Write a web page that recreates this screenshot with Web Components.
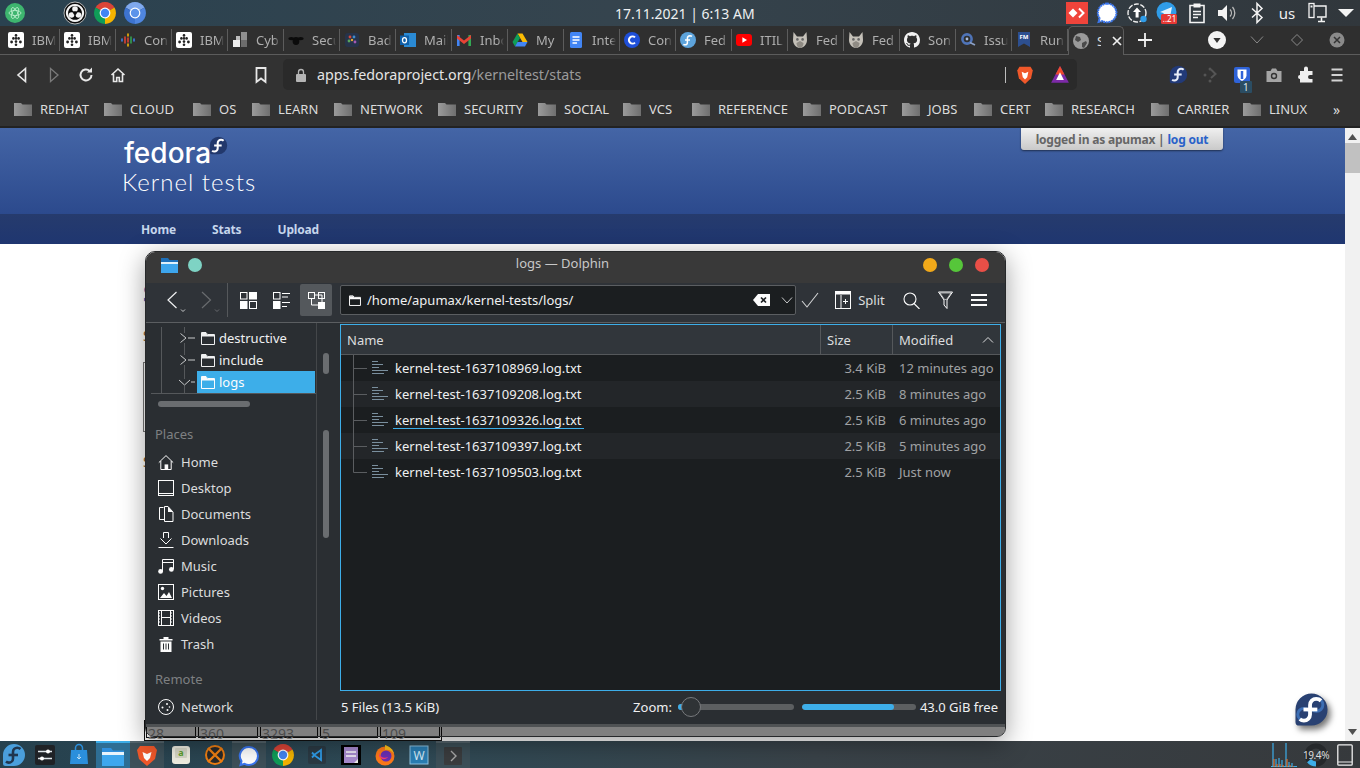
<!DOCTYPE html>
<html lang="en">
<head>
<meta charset="utf-8">
<title>Kernel tests</title>
<style>
  html, body { margin: 0; height: 100%; overflow: hidden; }
  body {
    position: relative;
    width: 1360px;
    height: 768px;
    display: flex;
    flex-direction: column;
    font-family: "Noto Sans", sans-serif;
  }
</style>
</head>
<body>
<top-panel></top-panel>
<browser-tabs></browser-tabs>
<browser-toolbar></browser-toolbar>
<bookmark-bar></bookmark-bar>
<kernel-page></kernel-page>
<task-bar></task-bar>
<dolphin-window></dolphin-window>

<script>
// shared svg helper, viewBox defaults to the 16px breeze grid
const svg = (w, h, body, vb = '0 0 16 16') =>
  `<svg width="${w}" height="${h}" viewBox="${vb}" fill="none" stroke="currentColor" stroke-width="1">${body}</svg>`;

const fedoraBody = (bubble, ink, ring) => `
  <path d="M12 1a11 11 0 0 1 0 22H3.5A2.5 2.5 0 0 1 1 20.5V12A11 11 0 0 1 12 1z" fill="${bubble}" stroke="none"/>
  ${ring ? `<circle cx="15.4" cy="8.8" r="4.4" stroke="${ring}" stroke-width="2"/><circle cx="6.8" cy="15.4" r="4.2" stroke="${ring}" stroke-width="2"/>` : ''}
  <path d="M18.5 6c-1-.9-2.2-1.3-3.3-1.3A4.2 4.2 0 0 0 11 9v6.4a4.2 4.2 0 0 1-4.2 4.2c-1.1 0-2-.3-2.8-1" stroke="${ink}" stroke-width="2.6" fill="none"/>
  <path d="M6.5 12h9.5" stroke="${ink}" stroke-width="2.6"/>`;

const chromeBody = (a, b, c, eye) => `
  <g stroke="none">
    <path d="M12 12 2.5 6.5A11 11 0 0 1 21.5 6.5z" fill="${a}"/>
    <path d="M12 12 21.5 6.5A11 11 0 0 1 12 23z" fill="${b}"/>
    <path d="M12 12 12 23A11 11 0 0 1 2.5 6.5z" fill="${c}"/>
    <circle cx="12" cy="12" r="5.4" fill="#fff"/>
    <circle cx="12" cy="12" r="4.2" fill="${eye}"/>
  </g>`;

const githubPath = 'M8 0C3.58 0 0 3.58 0 8c0 3.54 2.29 6.53 5.47 7.59.4.07.55-.17.55-.38 0-.19-.01-.82-.01-1.49-2.01.37-2.53-.49-2.69-.94-.09-.23-.48-.94-.82-1.13-.28-.15-.68-.52-.01-.53.63-.01 1.08.58 1.23.82.72 1.21 1.87.87 2.33.66.07-.52.28-.87.51-1.07-1.78-.2-3.64-.89-3.64-3.95 0-.87.31-1.59.82-2.15-.08-.2-.36-1.02.08-2.12 0 0 .67-.21 2.2.82.64-.18 1.32-.27 2-.27s1.36.09 2 .27c1.53-1.04 2.2-.82 2.2-.82.44 1.1.16 1.92.08 2.12.51.56.82 1.27.82 2.15 0 3.07-1.87 3.75-3.65 3.95.29.25.54.73.54 1.48 0 1.07-.01 1.93-.01 2.2 0 .21.15.46.55.38A8.01 8.01 0 0 0 16 8c0-4.42-3.58-8-8-8z';

const favicons = {
  ibm: `<rect width="16" height="16" rx="2" fill="#fff" stroke="none"/><g fill="#222" stroke="none"><circle cx="8" cy="3.4" r="1.3"/><circle cx="5.4" cy="6.4" r="1.3"/><circle cx="8" cy="6.4" r="1.3"/><circle cx="10.6" cy="6.4" r="1.3"/><circle cx="3.6" cy="10" r="1.4"/><circle cx="8" cy="9.6" r="1.3"/><circle cx="12.4" cy="10" r="1.4"/><circle cx="8" cy="12.8" r="1.3"/></g>`,
  podcast: `<g stroke-width="1.5" stroke-linecap="round"><path d="M8 2v2M8 12v2" stroke="#fbbc04"/><path d="M8 6v4" stroke="#ea4335"/><path d="M5 5v6" stroke="#ea4335"/><path d="M11 5v6" stroke="#34a853"/><path d="M2 7v2" stroke="#4285f4"/><path d="M14 7v2" stroke="#4285f4"/></g>`,
  cyb: `<g stroke="none"><rect x="9" y="0" width="6" height="8" fill="#8f8f8f"/><rect x="1" y="8" width="7" height="7" fill="#eee"/><rect x="9" y="8" width="6" height="7" fill="#6c6c6c"/><rect x="4" y="4" width="4" height="4" fill="#bbb"/></g>`,
  bee: `<g stroke="none" fill="#0b0b0b"><ellipse cx="8" cy="9" rx="3.4" ry="4"/><ellipse cx="3.4" cy="6.6" rx="3" ry="1.6"/><ellipse cx="12.6" cy="6.6" rx="3" ry="1.6"/></g>`,
  bad: `<rect x="1" y="1" width="14" height="14" rx="3" fill="#26334a" stroke="none"/><g stroke="none"><circle cx="6" cy="5" r="1.4" fill="#d2483b"/><circle cx="10" cy="5" r="1.4" fill="#3f8ccf"/><circle cx="5" cy="9" r="1.4" fill="#58a55c"/><circle cx="8" cy="8" r="1.2" fill="#e1a73a"/><circle cx="11" cy="10" r="1.4" fill="#a559b5"/></g>`,
  outlook: `<rect x="4" y="1" width="12" height="14" fill="#2a8ad4" stroke="none"/><rect x="0" y="3.5" width="9" height="9.5" fill="#0f5fa8" stroke="none"/><ellipse cx="4.5" cy="8.2" rx="2" ry="2.6" stroke="#fff" stroke-width="1.3"/>`,
  gmail: `<g stroke="none"><path d="M1 3h2.6v11H1z" fill="#4285f4"/><path d="M12.4 3H15v11h-2.6z" fill="#34a853"/><path d="M1 3 8 8.6 15 3v3.4L8 12 1 6.4z" fill="#ea4335"/></g>`,
  drive: `<g stroke="none"><path d="M5.5 1.5h5L15.5 10h-5z" fill="#fbbc04"/><path d="M5.5 1.5 .5 10 3 14.5 8 6z" fill="#0f9d58"/><path d="M3 14.5h10l2.5-4.5h-10z" fill="#4285f4"/></g>`,
  docs: `<rect x="2" y="0" width="12" height="16" rx="1.5" fill="#4285f4" stroke="none"/><path d="M4.5 5h7M4.5 8h7M4.5 11h4.5" stroke="#fff" stroke-width="1.4"/>`,
  c: `<circle cx="8" cy="8" r="8" fill="#1f4fd8" stroke="none"/><path d="M11 5.4a3.6 3.6 0 1 0 0 5.2" stroke="#fff" stroke-width="2"/>`,
  fedora: `<circle cx="8" cy="8" r="8" fill="#5da3db" stroke="none"/><path d="M12 4.4c-.6-.5-1.3-.7-2-.7A2.7 2.7 0 0 0 7.4 6.4v4A2.4 2.4 0 0 1 5 12.8c-.7 0-1.2-.2-1.6-.5M5 8h5" stroke="#fff" stroke-width="1.5"/>`,
  yt: `<rect x="0" y="2" width="16" height="12" rx="3" fill="#f00" stroke="none"/><path d="M6.4 5.2v5.6L11 8z" fill="#fff" stroke="none"/>`,
  owl: `<path d="M1.500 0 5 4.500h6L14.500 0 15 8c0 4-3 8-7 8s-7-4-7-8z" fill="#c4c0b8" stroke="none"/><path d="M8 16c-2 0-3.500-2.500-3.500-5L8 9l3.500 2c0 2.500-1.500 5-3.500 5z" fill="#8f8b84" stroke="none"/><circle cx="5.400" cy="7.400" r="1.300" fill="#666" stroke="none"/><circle cx="10.600" cy="7.400" r="1.300" fill="#666" stroke="none"/>`,
  github: `<path d="${githubPath}" fill="#f2f2f2" stroke="none"/>`,
  q: `<circle cx="7" cy="7" r="4.600" stroke="#4f74b8" stroke-width="2.600"/><circle cx="7" cy="7" r="1.400" fill="#a9bcdc" stroke="none"/><path d="M10 10.500l5 2.500" stroke="#8a9fc4" stroke-width="1.800"/>`,
  fm: `<path d="M2 0h12v15l-6-3.5L2 15z" fill="#2d4f8f" stroke="none"/><text x="8" y="7.4" font-family="Noto Sans" font-size="6" font-weight="700" fill="#fff" stroke="none" text-anchor="middle">FM</text>`,
  globe: `<circle cx="8" cy="8" r="8" fill="#9a9a9a" stroke="none"/><path d="M3 3l4 1 1 3-3 2-3-2zM9 10l4-2 1 2-3 5-2-1z" fill="#4a4a4a" stroke="none"/>`
};

const placeIcons = {
  Home: '<path d="M.8 8.6 8 1.6l7.2 7M2.8 7v8.5h10.4V7"/><rect x="6.6" y="10.4" width="3.6" height="5" fill="currentColor" stroke="none"/>',
  Desktop: '<rect x=".5" y=".5" width="15" height="15"/><path d="M1 13.5h14"/>',
  Documents: '<path d="M1.5 13.5V1.5h4M6.5.5v15h8.5V6L10 .5z"/><path d="M10 .5V6h5z" fill="currentColor" stroke="none"/><path d="M1.5 13.5h5"/>',
  Downloads: '<path d="M5.5 6V.5h5V6M2.5 6.5 8 12l5.5-5.5M.5 15.5h15"/>',
  Music: '<path d="M4.5 13V1.5h11V11M4.5 4.5h11"/><circle cx="2.6" cy="13.4" r="2.4" fill="currentColor" stroke="none"/><circle cx="13.4" cy="11.4" r="2.4" fill="currentColor" stroke="none"/>',
  Pictures: '<rect x=".5" y=".5" width="15" height="15"/><circle cx="4.5" cy="4.5" r="1.7" fill="currentColor" stroke="none"/><path d="M2 14l4-5 2.5 3 2.5-4 3 6z" fill="currentColor" stroke="none"/>',
  Videos: '<rect x=".5" y=".5" width="15" height="15"/><path d="M3.5 1v14M12.5 1v14M4 7.5h8"/><path d="M1 3h2M1 6h2M1 9h2M1 12h2M13 3h2M13 6h2M13 9h2M13 12h2" stroke-dasharray="1 1"/>',
  Trash: '<path d="M1.5 3h13v1.6h-13zM5.5 3V1h5v2z" fill="currentColor" stroke="none"/><path d="M2.5 5.5h11V16h-11z" fill="currentColor" stroke="none"/><path d="M5.5 7.5v6M8 7.5v6M10.5 7.5v6" stroke="#2a2e32"/>',
  Network: '<circle cx="8" cy="8" r="7.5"/><g fill="currentColor" stroke="none"><circle cx="4.5" cy="8.5" r="1"/><circle cx="9" cy="5" r="1"/><circle cx="9.5" cy="11" r="1"/><circle cx="11.5" cy="8" r=".8"/></g>'
};

// ---- desktop panel at the very top
class TopPanel extends HTMLElement {
  constructor() {
    super();
    const cell = (body, vb = '0 0 24 24', size = 24) => `<span class="cell">${svg(size, size, body, vb)}</span>`;
    const left = [
      `<circle cx="12" cy="12" r="10" fill="#3eb56f" stroke="none"/><g stroke="#bff0d0" stroke-width=".8"><ellipse cx="12" cy="12" rx="6" ry="2.6"/><ellipse cx="12" cy="12" rx="6" ry="2.6" transform="rotate(60 12 12)"/><ellipse cx="12" cy="12" rx="6" ry="2.6" transform="rotate(120 12 12)"/></g>`,
      null,
      `<circle cx="12" cy="12" r="11" fill="#0a0a0a" stroke="#ddd" stroke-width=".8"/><g stroke="#f2f2f2" stroke-width="2.2"><path d="M12 4a8 8 0 0 1 6.900 12"/><path d="M18.900 16a8 8 0 0 1-13.800 0"/><path d="M5.100 16A8 8 0 0 1 12 4"/></g><g fill="#f2f2f2" stroke="none"><circle cx="12" cy="8" r="2.800"/><circle cx="8.500" cy="14" r="2.800"/><circle cx="15.500" cy="14" r="2.800"/></g><circle cx="12" cy="12" r="1.800" fill="#0a0a0a" stroke="none"/>`,
      chromeBody('#db4437', '#f4b400', '#0f9d58', '#4285f4'),
      chromeBody('#7fa9ee', '#4f86e0', '#3d73cf', '#5c93ea')
    ];
    const right = [
      `<rect x="1" y="1" width="22" height="22" fill="#ef443b" stroke="none"/><path d="M3.500 12 8 7.500 12.500 12 8 16.500z" fill="#fff" stroke="none"/><path d="M14 7.500 18.500 12 14 16.500" stroke="#fff" stroke-width="2"/>`,
      `<path d="M12 2.500a9.400 9.400 0 0 1 0 18.800 9.400 9.400 0 0 1-4.600-1.200L3.600 21l1-3.700A9.400 9.400 0 0 1 12 2.500z" fill="#fff" stroke="#3a76f0" stroke-width="2" stroke-dasharray="2 .6"/>`,
      `<circle cx="12" cy="12" r="9" stroke="#eee" stroke-width="1.400" stroke-dasharray="5 1.500"/><path d="M12 6.500l4 4.500h-2.400v5.500h-3V11H8z" fill="#fff" stroke="none"/><circle cx="18.500" cy="18" r="3.200" fill="#2f9ce8" stroke="none"/>`,
      `<circle cx="11.500" cy="11" r="10" fill="#2f9ce8" stroke="none"/><path d="M5 11l12-5-2 10-4-2.500-2 2-.5-3.500z" fill="#e6f4fd" stroke="none"/><rect x="6" y="13" width="16" height="10" rx="1.500" fill="#e53935" stroke="none"/><text x="14.500" y="21" font-family="Noto Sans" font-size="8" fill="#fff" stroke="none" text-anchor="middle">..21</text>`,
      `<path d="M5 4.500h14v17H5z" stroke="#f4f4f4" stroke-width="1.600"/><rect x="8.500" y="2.500" width="7" height="4" fill="#f4f4f4" stroke="none"/><path d="M8 10.500h8M8 13.500h8M8 16.500h5" stroke="#f4f4f4" stroke-width="1.300"/>`,
      `<path d="M3 9h4l5-5v16l-5-5H3z" fill="#f4f4f4" stroke="none"/><path d="M15 8.500a5 5 0 0 1 0 7M17.500 6a9 9 0 0 1 0 12" stroke="#bbb" stroke-width="1.300"/>`,
      `<path d="M7 7.500l10 9-5 5V2.500l5 5-10 9" stroke="#f4f4f4" stroke-width="1.500"/>`,
      'us',
      `<rect x="4" y="2.500" width="5" height="14" stroke="#f4f4f4" stroke-width="1.300"/><path d="M9 5h12v11H12" stroke="#f4f4f4" stroke-width="1.400"/><path d="M13 20.500h7M16.500 16.500v4" stroke="#f4f4f4" stroke-width="1.600"/><rect x="5.500" y="4.500" width="2" height="2" fill="#f4f4f4" stroke="none"/>`,
      `<path d="M4 8h16l-8 8z" fill="#f4f4f4" stroke="none"/>`
    ];
    this.attachShadow({ mode: 'open' }).innerHTML = `
      <style>
        :host {
          display: flex;
          flex: none;
          height: 26px;
          align-items: center;
          background: linear-gradient(90deg, #2a4250, #35444e 45%, #31373c);
          color: #eef0f1;
          font-size: 14px;
        }
        .cell { flex: none; width: 30px; height: 26px; display: flex; align-items: center; justify-content: center; }
        .cell:last-child { width: 28px; }
        .clock { margin-left: 465px; white-space: nowrap; }
        .right { margin-left: auto; display: flex; align-items: center; }
        .us { font-size: 15px; }
      </style>
      ${left.map(b => b ? cell(b) : '<span class="cell"></span>').join('')}
      <span class="clock">17.11.2021 | 6:13 AM</span>
      <div class="right">
        ${right.map(b => b === 'us' ? '<span class="cell us">us</span>' : cell(b)).join('')}
      </div>`;
  }
}
customElements.define('top-panel', TopPanel);

// ---- chrome tab strip
class BrowserTabs extends HTMLElement {
  constructor() {
    super();
    const tabs = [
      ['ibm', 'IBM'], ['ibm', 'IBM'], ['podcast', 'Con'], ['ibm', 'IBM'], ['cyb', 'Cyb'], ['bee', 'Secu'],
      ['bad', 'Bad'], ['outlook', 'Mail'], ['gmail', 'Inbo'], ['drive', 'My'], ['docs', 'Inte'], ['c', 'Con'],
      ['fedora', 'Fed'], ['yt', 'ITIL'], ['owl', 'Fed'], ['owl', 'Fed'], ['github', 'Son'], ['q', 'Issu'], ['fm', 'Run']
    ];
    this.attachShadow({ mode: 'open' }).innerHTML = `
      <style>
        :host {
          display: flex;
          flex: none;
          height: 29px;
          padding-left: 4px;
          box-sizing: border-box;
          background: #2f2f2f;
          border-bottom: 1px solid #5c5c5c;
          color: #aeaeae;
          font-size: 13px;
        }
        .tab {
          flex: none;
          width: 56px;
          box-sizing: border-box;
          height: 22px;
          margin-top: 3px;
          padding-left: 4px;
          display: flex;
          align-items: center;
          gap: 8px;
          border-right: 1px solid #5c5c5c;
          overflow: hidden;
          white-space: nowrap;
        }
        .tab svg { flex: none; }
        .tab span { width: 24px; overflow: hidden; -webkit-mask-image: linear-gradient(90deg, #000 75%, transparent); mask-image: linear-gradient(90deg, #000 75%, transparent); }
        .active {
          flex: none;
          width: 56px;
          height: 29px;
          margin-top: 0;
          box-sizing: border-box;
          padding-left: 4px;
          background: #323232;
          border: 1px solid #5c5c5c;
          border-bottom: 0;
          border-radius: 5px 5px 0 0;
          display: flex;
          align-items: center;
          gap: 8px;
        }
        .active span { width: 4px; overflow: hidden; color: #ddd; }
        .active .x { color: #eee; margin-left: 3px; display: flex; }
        .btn { flex: none; width: 39px; display: flex; align-items: center; justify-content: center; color: #8a8a8a; }
      </style>
      ${tabs.map(([f, t]) => `<div class="tab">${svg(16, 16, favicons[f])}<span>${t}</span></div>`).join('')}
      <div class="active">${svg(16, 16, favicons.globe)}<span>S</span><div class="x">${svg(10, 10, '<path d="M1 1l8 8M9 1 1 9" stroke-width="1.7"/>', '0 0 10 10')}</div></div>
      <div class="btn" style="width:41px;color:#f2f2f2">${svg(14, 14, '<path d="M7 0v14M0 7h14" stroke-width="1.8"/>', '0 0 14 14')}</div>
      <div class="btn" style="width:32px"></div>
      <div class="btn" style="width:40px;color:#f4f4f4">${svg(20, 20, '<circle cx="10" cy="10" r="9" fill="currentColor" stroke="none"/><path d="M6.4 8h7.2L10 13z" fill="#333" stroke="none"/>', '0 0 20 20')}</div>
      <div class="btn" style="width:40px">${svg(14, 14, '<path d="M1 3.5 7 10l6-6.5"/>', '0 0 14 14')}</div>
      <div class="btn" style="width:40px">${svg(14, 14, '<path d="M7 1.5 12.5 7 7 12.5 1.500 7z"/>', '0 0 14 14')}</div>
      <div class="btn" style="width:40px">${svg(16, 16, '<circle cx="8" cy="8" r="7.5" fill="#8a8a8a" stroke="none"/><path d="M5 5l6 6M11 5l-6 6" stroke="#333" stroke-width="1.5"/>')}</div>`;
  }
}
customElements.define('browser-tabs', BrowserTabs);

// ---- back/forward, address bar and extensions
class BrowserToolbar extends HTMLElement {
  constructor() {
    super();
    const btn = (w, body, color = '#e8e8e8', size = 18, ml = 0) =>
      `<span class="btn" style="width:${w}px;color:${color};margin-left:${ml}px">${svg(size, size, body, '0 0 18 18')}</span>`;
    this.attachShadow({ mode: 'open' }).innerHTML = `
      <style>
        :host {
          display: flex;
          flex: none;
          height: 39px;
          align-items: center;
          padding-left: 6px;
          background: #323232;
        }
        .btn { flex: none; height: 32px; display: flex; align-items: center; justify-content: center; position: relative; }
        .url {
          flex: none;
          width: 794px;
          height: 31px;
          box-sizing: border-box;
          margin-left: 6px;
          padding-left: 12px;
          display: flex;
          align-items: center;
          background: #2a2a2a;
          border-radius: 5px;
          font-size: 14.3px;
          color: #e4e4e4;
          white-space: nowrap;
        }
        .url em { font-style: normal; color: #9b9b9b; }
        .addr { margin-left: 10px; width: 688px; }
        .sep { width: 1px; height: 16px; background: #bdbdbd; flex: none; }
        .badge {
          position: absolute; left: 14px; top: 22px;
          background: #2b4d63; color: #dfe7ec;
          font-size: 10px; line-height: 12px; padding: 0 3px; border-radius: 1px;
        }
      </style>
      ${btn(32, '<path d="M12.500 2.500 5 9l7.500 6.500z" stroke-width="1.600"/>')}
      ${btn(32, '<path d="M5.500 2.500 13 9l-7.500 6.500z" stroke-width="1.300"/>', '#7a7a7a')}
      ${btn(32, '<path d="M14.500 9a5.500 5.500 0 1 1-1.800-4.100" stroke-width="2"/><path d="M15 1.500v5h-5z" fill="currentColor" stroke="none"/>')}
      ${btn(32, '<path d="M2.500 9 9 3l6.500 6M4.500 8v7.500h3.200v-4h2.600v4h3.200V8" stroke-width="1.600"/>')}
      ${btn(32, '<path d="M4.500 2h9v14L9 12.500 4.500 16z" stroke-width="1.800"/>', '#e8e8e8', 18, 111)}
      <div class="url">
        ${svg(12, 14, '<rect x="1" y="6" width="10" height="8" rx="1" fill="#b5b5b5" stroke="none"/><path d="M3.500 6V4a2.500 2.500 0 0 1 5 0v2" stroke="#b5b5b5" stroke-width="1.300"/>', '0 0 12 14')}
        <span class="addr">apps.fedoraproject.org<em>/kerneltest/stats</em></span>
        <span class="sep"></span>
        ${btn(38, '<path d="M4 1.500h10l2 3.500-1.500 7L9 17l-5.500-5L2 5z" fill="#f0582a" stroke="none"/><path d="M6 6l3 1.500L12 6l-1 5-2 2-2-2z" fill="#fff" stroke="none"/>', '#fff', 20)}
        ${btn(32, '<path d="M9 1 1 16h16z" fill="#7d2aa8" stroke="none"/><path d="M9 1 5 8.500h8z" fill="#ef4a2c" stroke="none"/><path d="M9 6.500l-3.500 7h7z" fill="#fff" stroke="none"/>', '#fff', 20)}
      </div>
      ${btn(32, '<g transform="scale(.75)">' + fedoraBody('#223a78', '#e8eefa') + '</g>', '#fff', 19, 85)}
      ${btn(32, '<g fill="#555" stroke="none"><circle cx="9" cy="3" r="1.500"/><circle cx="4" cy="9" r="1.500"/><circle cx="9" cy="15" r="1.500"/></g><path d="M10 3.500 14.500 8 10 12" stroke="#555" stroke-width="2"/>')}
      <span class="btn" style="width:32px">${svg(18, 18, '<rect x="1" y="1" width="16" height="16" rx="2" fill="#2f63d8" stroke="none"/><path d="M4.500 3.500h9v6c0 2.500-2.500 4.500-4.500 5.500-2-1-4.500-3-4.500-5.500z" fill="#fff" stroke="none"/><path d="M9 5v8" stroke="#2f63d8" stroke-width="2.500"/>', '0 0 18 18')}<span class="badge">1</span></span>
      ${btn(32, '<path d="M1.500 5h4l1.500-2.500h4L12.500 5h4v11h-15z" fill="#a5a5a5" stroke="none"/><circle cx="9" cy="10" r="3.200" fill="#333" stroke="none"/><circle cx="9" cy="10" r="1.800" fill="#a5a5a5" stroke="none"/>')}
      ${btn(31, '<path d="M7 2.500a2 2 0 0 1 4 0V5h4.500v4H13a2 2 0 0 0 0 4h2.500v3.500H3V13a2 2 0 0 1 0-4V5h4z" fill="#efefef" stroke="none"/>')}
      ${btn(32, '<path d="M3.500 3.500h11M3.500 9h11M3.500 14.500h11" stroke-width="2.200" stroke="#d2d2d2"/>')}`;
  }
}
customElements.define('browser-toolbar', BrowserToolbar);

// ---- bookmark folders, chrome sizes each chip to its label
class BookmarkBar extends HTMLElement {
  constructor() {
    super();
    const folders = [
      ['REDHAT', 90], ['CLOUD', 89], ['OS', 59], ['LEARN', 82], ['NETWORK', 104], ['SECURITY', 100], ['SOCIAL', 85], ['VCS', 69],
      ['REFERENCE', 111], ['PODCAST', 99], ['JOBS', 72], ['CERT', 71], ['RESEARCH', 106], ['CARRIER', 92], ['LINUX', 90]
    ];
    const icon = svg(18, 14, '<defs><linearGradient id="g" x1="0" x2="1"><stop offset="0" stop-color="#9b9b9b"/><stop offset="1" stop-color="#6f6f6f"/></linearGradient></defs><path d="M0 1h7l1.500 1.500H18V14H0z" fill="url(#g)" stroke="none"/>', '0 0 18 14');
    this.attachShadow({ mode: 'open' }).innerHTML = `
      <style>
        :host {
          display: flex;
          flex: none;
          height: 34px;
          box-sizing: border-box;
          padding: 0 0 2px 14px;
          align-items: center;
          background: #323232;
          border-bottom: 2px solid #222;
          color: #dcdcdc;
          font-size: 13px;
          white-space: nowrap;
        }
        .item { flex: none; display: flex; align-items: center; gap: 8px; }
        .more { font-size: 14px; }
      </style>
      ${folders.map(([f, w]) => `<div class="item" style="width:${w}px">${icon}<span>${f}</span></div>`).join('')}
      <span class="more">»</span>`;
  }
}
customElements.define('bookmark-bar', BookmarkBar);

// ---- the web page behind the dolphin window
class KernelPage extends HTMLElement {
  constructor() {
    super();
    const cols = [['28', 50], ['360', 60], ['3293', 58], ['5', 58], ['109', 60]];
    this.attachShadow({ mode: 'open' }).innerHTML = `
      <style>
        :host {
          display: flex;
          flex: 1;
          min-height: 0;
          position: relative;
          background: #fff;
          overflow: hidden;
        }
        .main { flex: 1; min-width: 0; display: flex; flex-direction: column; }
        header {
          flex: none;
          height: 86px;
          position: relative;
          background: linear-gradient(#4465a6, #2c4a8d);
        }
        .brand { padding: 10px 0 0 122px; color: #fff; line-height: 1; }
        .brand .name { font-family: Inter, sans-serif; font-size: 28px; font-weight: 500; padding-left: 2px; height: 29px; line-height: 30px; display: flex; }
        .brand .name svg { margin: -2px 0 0 -2px; }
        .brand .sub { font-family: Lato, sans-serif; font-size: 24px; letter-spacing: 1px; font-weight: 300; margin-top: 3px; }
        .login {
          position: absolute;
          right: 122px;
          top: 0;
          width: 202px;
          height: 22px;
          display: flex;
          align-items: center;
          justify-content: center;
          background: linear-gradient(#f0f0f0, #c9c9c9);
          border-radius: 0 0 3px 3px;
          box-shadow: 0 1px 2px rgba(0,0,0,.5);
          font-size: 12px;
          font-weight: 700;
          letter-spacing: -.2px;
          color: #666;
          white-space: pre;
        }
        .login a { color: #2a62c9; }
        nav {
          flex: none;
          height: 30px;
          display: flex;
          align-items: center;
          padding-left: 141px;
          gap: 36px;
          background: linear-gradient(#263b6d, #1f3670);
          color: #c6d6ec;
          font-size: 12px;
          font-weight: 700;
          letter-spacing: -.15px;
        }
        .content { flex: 1; display: flex; flex-direction: column; padding-left: 143px; min-height: 0; }
        h2 { margin: 36px 0 0; font-size: 24px; line-height: 26px; font-weight: 700; color: #2a4fb0; }
        .note { margin: 20px 0 0; font-size: 14px; line-height: 20px; color: #8a5a2a; }
        .box { margin-top: 16px; width: 400px; height: 70px; border: 1px solid #777; box-sizing: border-box; }
        .table {
          margin-top: auto;
          margin-left: 1px;
          align-self: flex-start;
          display: flex;
          gap: 2px;
          padding: 0 1px 2px;
          border-bottom: 1px solid #111;
          border-left: 1px solid #111;
          border-right: 1px solid #111;
        }
        .table div {
          box-sizing: border-box;
          height: 18px;
          border: 1px solid #111;
          border-top: 0;
          padding: 5px 0 0 1px;
          font-size: 14px;
          line-height: 17px;
          color: #999;
        }
        .scroll {
          flex: none;
          width: 15px;
          background: #f1f1f1;
          display: flex;
          flex-direction: column;
          align-items: center;
          justify-content: space-between;
          position: relative;
          color: #505050;
          padding: 6px 0;
          box-sizing: border-box;
        }
        .thumb { position: absolute; left: 0; top: 15px; width: 15px; height: 30px; background: #c1c1c1; }
        .logo { position: absolute; left: 1294px; top: 564px; filter: drop-shadow(3px 4px 3px rgba(0,0,0,.55)); }
      </style>
      <div class="main">
        <header>
          <div class="brand">
            <div class="name">fedora${svg(19, 19, fedoraBody('#22386c', '#fff'), '0 0 24 24')}</div>
            <div class="sub">Kernel tests</div>
          </div>
          <div class="login">logged in as apumax | <a>log out</a></div>
        </header>
        <nav><span>Home</span><span>Stats</span><span>Upload</span></nav>
        <div class="content">
          <h2>Stats</h2>
          <p class="note">Stats</p>
          <div class="box"></div>
          <p class="note">Stats</p>
          <div class="table">${cols.map(([t, w]) => `<div style="width:${w}px">${t}</div>`).join('')}</div>
        </div>
      </div>
      <div class="scroll">
        ${svg(9, 6, '<path d="M4.500 0 9 6H0z" fill="currentColor" stroke="none"/>', '0 0 9 6')}
        <div class="thumb"></div>
        ${svg(9, 6, '<path d="M4.500 6 9 0H0z" fill="currentColor" stroke="none"/>', '0 0 9 6')}
      </div>
      <div class="logo">${svg(35, 35, fedoraBody('#294172', '#fff', '#3c6eb4'), '0 0 24 24')}</div>`;
  }
}
customElements.define('kernel-page', KernelPage);

// ---- plasma task manager
class TaskBar extends HTMLElement {
  constructor() {
    super();
    const apps = [
      { b: '<rect x="2" y="2" width="20" height="20" rx="2" fill="#1f2226" stroke="none"/><path d="M5 8.500h14M5 15.500h14" stroke="#dfe6ea" stroke-width="1.400"/><circle cx="15" cy="8.500" r="2" fill="#fff" stroke="none"/><circle cx="9" cy="15.500" r="2" fill="#fff" stroke="none"/>' },
      { b: '<path d="M4 7h16l1 14H3z" fill="#2b8fdc" stroke="none"/><path d="M8.500 8V5a3.500 3.500 0 0 1 7 0v3" stroke="#2b8fdc" stroke-width="1.500"/><path d="M12 11v5M10 14l2 2 2-2" stroke="#bfe0f6"/>' },
      { active: true, b: '<path d="M1 4h9l2 2.500h11V22H1z" fill="#2f8fdc" stroke="none"/><path d="M1 8h22v3H1z" fill="#e8f4fc" stroke="none"/><path d="M1 11h22v11H1z" fill="#3ea7ee" stroke="none"/>' },
      { hover: true, b: '<path d="M5 2h14l3 4-2 9-8 7-8-7-2-9z" fill="#f0582a" stroke="none"/><path d="M7.500 8l4.500 2 4.500-2-1.500 6-3 3-3-3z" fill="#fff" stroke="none"/>' },
      { b: '<rect x="3" y="3" width="18" height="18" rx="3" fill="#f0eee2" stroke="none"/><rect x="6" y="5" width="12" height="10" rx="1" fill="#d8d8c8" stroke="none"/><text x="12" y="13" font-family="Noto Sans" font-size="9" font-weight="700" fill="#5aa02c" stroke="none" text-anchor="middle">a</text>' },
      { b: '<circle cx="12" cy="12" r="9" fill="#2a2a2a" stroke="#f07f12" stroke-width="2"/><path d="M5 5l14 14M19 5 5 19" stroke="#f07f12" stroke-width="2.400"/>' },
      { hover: true, b: '<path d="M12 3a9 9 0 0 1 0 18 9 9 0 0 1-4.400-1.100L3.500 21l1-3.800A9 9 0 0 1 12 3z" fill="#fff" stroke="#3a76f0" stroke-width="2"/>' },
      { b: chromeBody('#db4437', '#f4b400', '#0f9d58', '#4285f4') },
      { b: '<rect x="3" y="3" width="18" height="18" rx="2" fill="#2b3a44" stroke="none"/><path d="M16 7v10L9 12zM7 9.500l2.500 2.500L7 14.500" stroke="#2f9ce8" stroke-width="1.800"/>' },
      { b: '<rect x="2" y="2" width="20" height="20" fill="#000" stroke="none"/><rect x="5" y="4" width="14" height="16" fill="#a88bd0" stroke="none"/><path d="M7 9h10M7 13h10" stroke="#fff" stroke-width="1.500"/><path d="M19 16v4h-4z" fill="#eee" stroke="none"/>' },
      { b: '<circle cx="12" cy="13" r="9.500" fill="#ff7a1a" stroke="none"/><circle cx="13" cy="13" r="5.500" fill="#6b2fb5" stroke="none"/><path d="M12 2c4 1 8 4 9 9-2-3-5-5-9-4z" fill="#ffc21a" stroke="none"/><path d="M6 10c1 4 5 6 9 4-2 3-7 3-9-1z" fill="#ff3f6c" stroke="none"/>' },
      { b: '<rect x="3" y="3" width="18" height="18" fill="#2a7fb5" stroke="#8fc4e2"/><text x="12" y="17" font-family="Noto Sans" font-size="12" font-weight="400" fill="#d8eefa" stroke="none" text-anchor="middle">W</text>' },
      { hover: true, b: '<rect x="3" y="3" width="18" height="18" rx="1" fill="#3b3d3f" stroke="none"/><path d="M10 7l5 5-5 5" stroke="#aaa" stroke-width="1.400"/>' }
    ];
    const bars = [[2, 24], [5, 8], [8, 9], [11, 7], [15, 24], [18, 5], [21, 4]];
    this.attachShadow({ mode: 'open' }).innerHTML = `
      <style>
        :host {
          display: flex;
          flex: none;
          height: 27px;
          align-items: stretch;
          background: linear-gradient(90deg, #26414e, #2f4a56 30%, #3a4349 60%, #36393c);
          color: #ddd;
          font-size: 10px;
        }
        .start { flex: none; width: 28px; display: flex; align-items: center; justify-content: center; }
        .app { flex: none; width: 34px; display: flex; align-items: center; justify-content: center; box-sizing: border-box; }
        .app.active { background: #2e6e94; border-top: 2px solid #3daee9; }
        .app.hover { background: #3d5059; border-top: 2px solid #56666e; }
        .tray { margin-left: auto; display: flex; align-items: center; padding-right: 7px; }
        .cpu { position: relative; width: 24px; height: 24px; margin: 0 9px 0 7px; display: flex; align-items: center; justify-content: center; }
        .cpu svg { position: absolute; left: 0; top: 0; }
        .cpu span { position: relative; letter-spacing: -.4px; font-size: 10px; color: #ddd; }
      </style>
      <div class="start">${svg(24, 24, fedoraBody('#4a9fdc', '#20364f'), '0 0 24 24')}</div>
      ${apps.map(a => `<div class="app ${a.active ? 'active' : ''} ${a.hover ? 'hover' : ''}">${svg(24, 24, a.b, '0 0 24 24')}</div>`).join('')}
      <div class="tray">
        ${svg(26, 24, '<path d="M0 23.500h26" stroke="#3daee9"/>' + bars.map(([x, h]) => `<path d="M${x} 24v-${h}" stroke="#3daee9" stroke-width="1.200"/><path d="M${x + 1} 24v-${Math.round(h / 3)}" stroke="#e0702a" stroke-width="1.200"/>`).join(''), '0 0 26 24')}
        <div class="cpu">
          ${svg(24, 24, '<circle cx="12" cy="12" r="9" stroke="#25282b" stroke-width="5"/><path d="M12 21a9 9 0 0 1-7-3.400" stroke="#3daee9" stroke-width="5"/>', '0 0 24 24')}
          <span>19.4%</span>
        </div>
        ${svg(16, 22, '<rect x=".8" y=".8" width="14.400" height="20.400" rx="1" stroke="#eee" stroke-width="1.300"/><path d="M1 18h14" stroke="#eee"/>', '0 0 16 22')}
      </div>`;
  }
}
customElements.define('task-bar', TaskBar);

// ---- file manager window, free on the desktop
class DolphinWindow extends HTMLElement {
  constructor() {
    super();
    const files = [
      ['kernel-test-1637108969.log.txt', '3.4 KiB', '12 minutes ago'],
      ['kernel-test-1637109208.log.txt', '2.5 KiB', '8 minutes ago'],
      ['kernel-test-1637109326.log.txt', '2.5 KiB', '6 minutes ago'],
      ['kernel-test-1637109397.log.txt', '2.5 KiB', '5 minutes ago'],
      ['kernel-test-1637109503.log.txt', '2.5 KiB', 'Just now']
    ];
    const folder = svg(14, 14, '<path d="M.5 2V13.500h13V3.500H6.500L5 1.500H.5z"/><path d="M1 2h4l1.500 2H13v1.500H1z" fill="currentColor" stroke="none"/>', '0 0 14 14');
    const treeLine = (extra) => svg(46, 22, `<path d="M10.500 0v22" stroke="#55585b"/>${extra}`, '0 0 46 22');
    const closedRow = '<path d="M33.500 0v6M33.500 16v6" stroke="#55585b"/><path d="M29.500 6.500 35 11l-5.500 4.500M37 11h7" stroke="#c8cacb"/>';
    const openRow = '<path d="M33.500 0v8M33.500 15v7" stroke="#55585b"/><path d="M28 9l5.500 5 5.500-5M40 11h4" stroke="#c8cacb"/>';
    const fileIcon = svg(18, 16, '<path d="M1 1.500h6M1 4.500h11M1 7.500h7M1 10.500h16M1 13.500h12" stroke="#7a8f9e"/>', '0 0 18 16');
    const branch = last => svg(22, 26, `<path d="M.5 0V${last ? 13.5 : 26}M.5 13.500H14" stroke="#5a5d60"/>`, '0 0 22 26');

    this.attachShadow({ mode: 'open' }).innerHTML = `
      <style>
        :host {
          position: absolute;
          left: 145px;
          top: 251px;
          width: 861px;
          height: 486px;
          box-sizing: border-box;
          display: flex;
          flex-direction: column;
          border: 1px solid #26282a;
          border-radius: 10px 10px 9px 9px;
          overflow: hidden;
          box-shadow: 0 6px 26px rgba(0,0,0,.38);
          color: #eff0f1;
          font-size: 13px;
        }
        .title {
          flex: none;
          height: 31px;
          box-sizing: border-box;
          display: flex;
          align-items: center;
          background: #393939;
          position: relative;
          padding: 0 0 5px 15px;
          gap: 10px;
        }
        .title .label { position: absolute; left: 0; right: 26px; top: 1px; text-align: center; color: #c8c8c8; line-height: 20px; }
        .dots { margin-left: auto; margin-right: 16px; display: flex; gap: 12px; position: relative; }
        .dot { width: 14px; height: 14px; border-radius: 50%; }
        .tools {
          flex: none;
          height: 40px;
          display: flex;
          align-items: center;
          background: #2f3338;
          border-bottom: 1px solid #5b5e61;
          box-sizing: border-box;
          padding: 0 0 5px 9px;
        }
        .tb { flex: none; height: 32px; display: flex; align-items: center; justify-content: center; border-radius: 2px; }
        .tsep { flex: none; width: 1px; height: 34px; background: #55585b; margin: 0 4px 0 4px; }
        .tb.on { background: #54585c; margin-left: 2px; }
        .path {
          flex: none;
          width: 456px;
          height: 30px;
          box-sizing: border-box;
          margin: 0 2px 0 8px;
          padding-left: 8px;
          display: flex;
          align-items: center;
          gap: 6px;
          background: #1b1e20;
          border: 1px solid #5b5e61;
          border-radius: 2px;
          white-space: nowrap;
        }
        .path .txt { flex: 1; }
        .body { flex: none; height: 401px; display: flex; background: #2a2e32; }
        .side { flex: none; width: 171px; box-sizing: border-box; border-right: 1px solid #44474a; padding-top: 4px; color: #dcddde; height: 397px; }
        .tree { margin-left: 5px; border-bottom: 1px solid #55585b; height: 66px; color: #fcfcfc; }
        .trow { height: 22px; display: flex; align-items: stretch; }
        .tcell { width: 118px; display: flex; align-items: center; gap: 4px; padding-left: 4px; box-sizing: border-box; color: #eff0f1; }
        .trow.sel .tcell { background: #3daee9; color: #fcfcfc; }
        .hbar { width: 92px; height: 6px; border-radius: 3px; background: #6a6d70; margin: 7px 0 0 12px; }
        .head { margin: 14px 0 2px 9px; height: 26px; line-height: 26px; color: #7e8082; }
        .place { height: 26px; display: flex; align-items: center; padding-left: 12px; gap: 7px; color: #fcfcfc; }
        .place span { color: #dcddde; }
        .remote { margin-top: 9px; }
        .gutter { flex: none; width: 23px; position: relative; }
        .sb { position: absolute; left: 6px; width: 6px; background: #6a6d70; border-radius: 3px; }
        .right { flex: 1; min-width: 0; display: flex; flex-direction: column; padding-top: 1px; padding-right: 4px; }
        .pane { flex: none; height: 367px; box-sizing: border-box; border: 1px solid #3daee9; background: #1b1e20; }
        .cols { height: 30px; display: grid; grid-template-columns: 480px 72px 1fr; background: #31363b; border-bottom: 1px solid #55585b; box-sizing: border-box; color: #dcddde; }
        .cols div { padding-left: 6px; line-height: 30px; border-right: 1px solid #55585b; }
        .cols div:last-child { border: 0; display: flex; justify-content: space-between; align-items: center; padding-right: 6px; }
        .row { height: 26px; display: grid; grid-template-columns: 480px 65px 1fr; align-items: center; white-space: nowrap; position: relative; }
        .row:nth-child(odd) { background: #232629; }
        .name { display: flex; align-items: center; height: 26px; padding-left: 12px; }
        .name .fi { margin: 0 6px 0 -4px; display: flex; }
        .name .u { padding: 0 2px; margin-left: -2px; height: 18px; line-height: 18px; box-sizing: border-box; border-bottom: 1px solid transparent; }
        .name .u.cur { border-bottom-color: #3daee9; }
        .dim { color: #a0a2a4; }
        .num { text-align: right; }
        .mod { padding-left: 13px; }
        .status { flex: 1; display: flex; align-items: center; padding: 0 3px 1px 1px; }
        .status .zoom { margin-left: auto; }
        .slider { margin: 0 8px 0 6px; display: flex; }
        .cap { width: 114px; height: 6px; border-radius: 3px; background: #5c5f61; overflow: hidden; margin-right: 4px; }
        .cap i { display: block; width: 92px; height: 6px; background: #3daee9; border-radius: 3px; }
        .band { flex: 1; background: linear-gradient(#4f5254 0 3px, rgba(0,0,0,.5) 3px); }
      </style>
      <div class="title">
        ${svg(17, 16, '<path d="M0 1h7l1.500 2H17v13H0z" fill="#1d6fb8" stroke="none"/><path d="M0 5h17v2H0z" fill="#dff0fb" stroke="none"/><path d="M0 7h17v9H0z" fill="#3da5ec" stroke="none"/>', '0 0 17 16')}
        <span class="dot" style="background:#7ed3c4"></span>
        <span class="label">logs — Dolphin</span>
        <div class="dots">
          <span class="dot" style="background:#f1a91a"></span>
          <span class="dot" style="background:#56c63a"></span>
          <span class="dot" style="background:#ea4f47"></span>
        </div>
      </div>
      <div class="tools">
        <div class="tb" style="width:34px">${svg(30, 26, '<path d="M19.500 5 11 13l8.500 8" stroke="#eff0f1" stroke-width="1.200"/><path d="M24 22.500l2 2 2-2" stroke="#c8cacb"/>', '0 0 30 26')}</div>
        <div class="tb" style="width:34px">${svg(30, 26, '<path d="M11 5l8.500 8-8.500 8" stroke="#686b6e" stroke-width="1.200"/><path d="M24 22.500l2 2 2-2" stroke="#686b6e"/>', '0 0 30 26')}</div>
        <div class="tsep"></div>
        <div class="tb" style="width:32px">${svg(17, 17, '<rect x=".5" y=".5" width="6.500" height="6.500" stroke="#fff"/><rect x="9" y="0" width="8" height="7.500" fill="#fff" stroke="none"/><rect x="0" y="9" width="7.500" height="8" fill="#fff" stroke="none"/><rect x="9.500" y="9.500" width="7" height="7" stroke="#fff"/>', '0 0 17 17')}</div>
        <div class="tb" style="width:34px">${svg(17, 17, '<rect x=".5" y=".5" width="6.500" height="6.500" stroke="#fff"/><rect x="0" y="9" width="7.500" height="8" fill="#fff" stroke="none"/><path d="M9 1.500h8M9 5h6M9 10.500h8M9 14.500h5" stroke="#fff"/>', '0 0 17 17')}</div>
        <div class="tb on" style="width:32px">${svg(17, 17, '<rect x=".5" y=".5" width="6" height="6" stroke="#fff"/><rect x="10" y="10" width="7" height="7" fill="#fff" stroke="none"/><path d="M7 3h7v7M3.500 7v6H10" stroke="#fff"/><rect x="10.500" y=".5" width="6" height="6" stroke="#fff"/>', '0 0 17 17')}</div>
        <div class="path">
          <span style="color:#fcfcfc;display:flex">${svg(12, 12, '<path d="M.7 2.500V15.300h14.600V4.500H7L5.500 2.500H.7z" stroke-width="1.300"/><path d="M1 3h4.500L7 5h8v2H1z" fill="currentColor" stroke="none"/>')}</span>
          <span class="txt">/home/apumax/kernel-tests/logs/</span>
          ${svg(18, 14, '<path d="M5 1h12v12H5L0 7z" fill="#fcfcfc" stroke="none"/><path d="M8 4.500l5 5M13 4.500l-5 5" stroke="#1b1e20" stroke-width="1.600"/>', '0 0 18 14')}
          <span style="display:flex;margin:0 1px 0 3px">${svg(14, 14, '<path d="M2 4.500 7 10l5-5.500" stroke="#c8cacb"/>', '0 0 14 14')}</span>
        </div>
        <div class="tb" style="width:24px">${svg(18, 18, '<path d="M1 10l5 6L17 2" stroke="#d2d3d4" stroke-width="1.100"/>', '0 0 18 18')}</div>
        <div class="tb" style="gap:7px;margin-left:13px;width:50px">${svg(16, 18, '<rect x=".5" y=".5" width="15" height="17" stroke="#fcfcfc"/><path d="M1 2h14" stroke="#fcfcfc" stroke-width="3"/><path d="M6 4v14" stroke="#fcfcfc"/><path d="M8 10.500h5M10.500 8v5" stroke="#fcfcfc"/>', '0 0 16 18')}<span style="color:#dcddde">Split</span></div>
        <div class="tb" style="width:36px;margin-left:8px">${svg(17, 17, '<circle cx="7" cy="7" r="6" stroke="#fcfcfc" stroke-width="1.100"/><path d="M11 11.500 16.500 17" stroke="#fcfcfc" stroke-width="1.100"/>', '0 0 17 17')}</div>
        <div class="tb" style="width:32px">${svg(15, 18, '<path d="M.5 1h14L9 9v8.500L6 14V9z" stroke="#fcfcfc"/><path d="M2 2h11L8.500 8.500H6.500z" stroke="#fcfcfc" stroke-width=".6"/>', '0 0 15 18')}</div>
        <div class="tb" style="width:36px">${svg(18, 14, '<path d="M1 2h16M1 7h16M1 12h16" stroke="#fcfcfc" stroke-width="2"/>', '0 0 18 14')}</div>
      </div>
      <div class="body">
        <div class="side">
          <div class="tree">
            <div class="trow">${treeLine(closedRow)}<div class="tcell">${folder}destructive</div></div>
            <div class="trow">${treeLine(closedRow)}<div class="tcell">${folder}include</div></div>
            <div class="trow sel">${treeLine(openRow)}<div class="tcell">${folder}logs</div></div>
          </div>
          <div class="hbar"></div>
          <div class="head">Places</div>
          ${['Home', 'Desktop', 'Documents', 'Downloads', 'Music', 'Pictures', 'Videos', 'Trash'].map(n => `<div class="place">${svg(16, 16, placeIcons[n])}<span>${n}</span></div>`).join('')}
          <div class="head remote">Remote</div>
          <div class="place">${svg(16, 16, placeIcons.Network)}<span>Network</span></div>
        </div>
        <div class="gutter">
          <div class="sb" style="top:30px;height:21px"></div>
          <div class="sb" style="top:107px;height:108px"></div>
        </div>
        <div class="right">
          <div class="pane">
            <div class="cols"><div>Name</div><div>Size</div><div>Modified${svg(12, 12, '<path d="M1 8.500 6 3.500l5 5" stroke="#dcddde"/>', '0 0 12 12')}</div></div>
            ${files.map(([n, s, m], i) => `
              <div class="row">
                <div class="name">${branch(i === 4)}<span class="fi">${fileIcon}</span><span class="u ${i === 2 ? 'cur' : ''}">${n}</span></div>
                <div class="num dim">${s}</div>
                <div class="mod dim">${m}</div>
              </div>`).join('')}
          </div>
          <div class="status">
            <span>5 Files (13.5 KiB)</span>
            <span class="zoom">Zoom:</span>
            <span class="slider">${svg(116, 22, '<rect x="0" y="8" width="116" height="6" rx="3" fill="#5c5f61" stroke="none"/><rect x="0" y="8" width="10" height="6" rx="3" fill="#3daee9" stroke="none"/><circle cx="13" cy="11" r="9.500" fill="#2f3336" stroke="#77797c" stroke-width="1"/>', '0 0 116 22')}</span>
            <div class="cap"><i></i></div>
            <span>43.0 GiB free</span>
          </div>
        </div>
      </div>
      <div class="band"></div>`;
  }
}
customElements.define('dolphin-window', DolphinWindow);
</script>
</body>
</html>
